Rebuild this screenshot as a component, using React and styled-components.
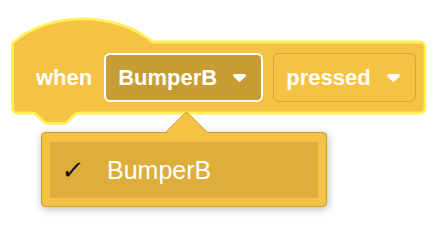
import React from 'react';
import styled, { createGlobalStyle } from 'styled-components';

const GlobalStyle = createGlobalStyle`
    html, body {
        margin: 0;
        padding: 0;
        background: #ffffff;
    }
    body {
        font-family: "Liberation Sans", Arial, Helvetica, sans-serif;
    }
`

const colors = {
    blockFill: '#F5C244',
    blockGlow: '#FFF155',
    fieldDark: '#C79C33',
    fieldBorder: '#D6A73C',
    menuBorder: '#CB9F38',
    menuItem: '#DDAE3B',
    text: '#ffffff'
}

/** Outline of the hat block, drawn in page coordinates (the block sits at 11,16) */
const HAT_PATH = [
    'M 12.5,43',
    'c 36.5,-32 103.5,-32 140,-1',
    'H 420 a 5 5 0 0 1 5,5 V 108 a 5 5 0 0 1 -5,5',
    'H 79',
    'c -2.6,0 -3.9,1.3 -5.2,2.6 l -5.2,5.2 c -1.3,1.3 -2.6,2.6 -5.2,2.6',
    'h -15.6',
    'c -2.6,0 -3.9,-1.3 -5.2,-2.6 l -5.2,-5.2 c -1.3,-1.3 -2.6,-2.6 -5.2,-2.6',
    'H 17 a 4.5 4.5 0 0 1 -4.5,-4.5 Z'
].join(' ')

const BlockShape = () => (
    <ShapeSvg width="418" height="112" viewBox="11 16 418 112">
        <path d={HAT_PATH} fill={colors.blockFill} stroke={colors.blockGlow} strokeWidth="2.8" strokeLinejoin="round" />
    </ShapeSvg>
)

const ShapeSvg = styled.svg`
    position: absolute;
    left: 0;
    top: 0;
    z-index: 0;
`

const DropArrow = () => (
    <ArrowSvg width="13" height="8" viewBox="0 0 13 8">
        <path d="M1.6 0 H11.4 a1.5 1.5 0 0 1 1.1 2.5 L7.6 7.3 a1.5 1.5 0 0 1 -2.2 0 L0.5 2.5 A1.5 1.5 0 0 1 1.6 0 Z" fill={colors.text} />
    </ArrowSvg>
)

const ArrowSvg = styled.svg`
    flex: none;
    display: block;
`

const Page = styled.div`
    width: 436px;
    height: 228px;
    overflow: hidden;
    padding: 16px 0 0 11px;
    box-sizing: border-box;
`

const Block = styled.div`
    position: relative;
    box-sizing: border-box;
    width: 416px;
    height: 110px;
    padding-top: 26px;
`

const Row = styled.div`
    position: relative;
    z-index: 1;
    display: flex;
    align-items: center;
    gap: 10px;
    height: 71px;
    padding-left: 25px;
`

const Label = styled.span`
    color: ${colors.text};
    font-size: 22px;
    font-weight: bold;
    margin-right: 2px;
`

const Field = styled.div`
    display: flex;
    align-items: center;
    gap: 16px;
    box-sizing: border-box;
    height: 49px;
    padding: 0 15px 0 12px;
    border-radius: 6px;
    background: ${props => props.open ? colors.fieldDark : colors.blockFill};
    border: ${props => props.open ? `2px solid ${colors.text}` : `1px solid ${colors.fieldBorder}`};
    color: ${colors.text};
    font-size: 22px;
    font-weight: bold;
`

const Menu = styled.div`
    position: absolute;
    left: 30px;
    top: 116px;
    z-index: 2;
    box-sizing: border-box;
    width: 286px;
    height: 75px;
    padding: 9px 8px 8px 8px;
    background: ${colors.blockFill};
    border: 1px solid ${colors.menuBorder};
    border-radius: 4px;
    box-shadow: 1px 2px 8px rgba(0, 0, 0, 0.28);
`

const MenuArrow = styled.div`
    position: absolute;
    left: 129px;
    top: -16px;
    width: 30px;
    height: 30px;
    background: ${colors.blockFill};
    border-top: 1px solid ${colors.menuBorder};
    border-left: 1px solid ${colors.menuBorder};
    border-top-left-radius: 4px;
    transform: rotate(45deg);
`

const MenuItem = styled.div`
    position: relative;
    display: flex;
    align-items: center;
    height: 56px;
    background: ${props => props.selected ? colors.menuItem : 'transparent'};
    color: ${colors.text};
    font-size: 25px;
`

const Check = styled.span`
    width: 57px;
    padding-left: 12px;
    box-sizing: border-box;
    color: #111111;
    font-family: "DejaVu Sans", sans-serif;
    font-size: 26px;
    font-weight: bold;
    transform: skewX(-8deg);
`

const App = () => {
    return (
        <Page>
            <GlobalStyle />
            <Block>
                <BlockShape />
                <Row>
                    <Label>when</Label>
                    <Field open>BumperB<DropArrow /></Field>
                    <Field>pressed<DropArrow /></Field>
                </Row>
                <Menu>
                    <MenuArrow />
                    <MenuItem selected>
                        <Check>✓</Check>
                        BumperB
                    </MenuItem>
                </Menu>
            </Block>
        </Page>
    )
}

export default App;
